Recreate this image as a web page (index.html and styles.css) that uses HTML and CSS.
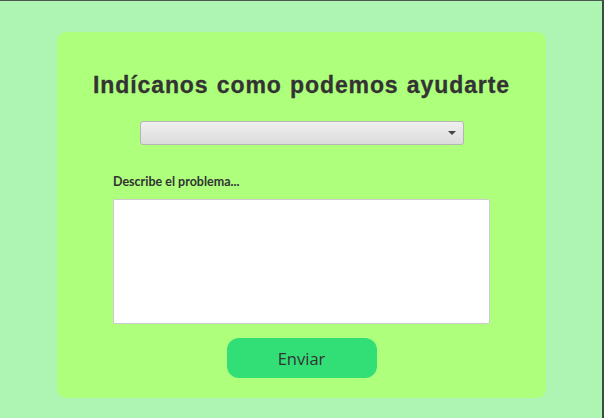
FILE: index.html
```html
<!DOCTYPE html>
<html lang="es">
<head>
<meta charset="utf-8">
<title>Ayuda</title>
<link rel="stylesheet" href="styles.css">
</head>
<body>
<div class="frame">
  <main class="card">
    <h1 class="title">Indícanos como podemos ayudarte</h1>
    <div class="select">
      <span class="arrow"></span>
    </div>
    <div class="field">
      <label class="label">Describe el problema...</label>
      <div class="textarea"></div>
    </div>
    <button class="send">Enviar</button>
  </main>
</div>
</body>
</html>
```
FILE: styles.css
```css
html, body {
  margin: 0;
  padding: 0;
}
body {
  width: 604px;
  height: 418px;
  overflow: hidden;
  background: #aef5b3;
}
.frame {
  box-sizing: border-box;
  width: 604px;
  height: 418px;
  border-top: 1px solid #4a5a4c;
  border-right: 2px solid #3d4a3f;
  padding: 31px 0 0 57px;
}
.card {
  box-sizing: border-box;
  width: 489px;
  height: 366px;
  background: #adff7c;
  border-radius: 9px;
  display: flex;
  flex-direction: column;
  align-items: center;
  padding-top: 40px;
}
.title {
  margin: 0;
  font-family: "Liberation Sans", Arial, sans-serif;
  font-weight: bold;
  font-size: 23px;
  letter-spacing: 0.9px;
  word-spacing: 1px;
  line-height: 26px;
  color: #333333;
  -webkit-text-stroke: 0.3px #333333;
}
.select {
  box-sizing: border-box;
  margin-top: 23px;
  width: 324px;
  height: 24px;
  border: 1px solid #b5b5b5;
  border-radius: 3px;
  background: linear-gradient(#efefef, #dcdcdc);
  display: flex;
  align-items: center;
  justify-content: flex-end;
  padding-right: 7px;
}
.arrow {
  width: 0;
  height: 0;
  border-left: 4px solid transparent;
  border-right: 4px solid transparent;
  border-top: 4px solid #444;
}
.field {
  margin-top: 29px;
  width: 377px;
  display: flex;
  flex-direction: column;
}
.label {
  font-family: Lato, "Noto Sans", sans-serif;
  font-weight: bold;
  font-size: 12.5px;
  line-height: 15px;
  color: #333333;
  margin-bottom: 10px;
}
.textarea {
  box-sizing: border-box;
  width: 377px;
  height: 125px;
  background: #ffffff;
  border: 1px solid #cccccc;
  border-radius: 2px;
}
.send {
  margin-top: 14px;
  width: 150px;
  height: 40px;
  border: none;
  border-radius: 12px;
  background: #31df76;
  color: #333333;
  font-family: "Open Sans", sans-serif;
  font-size: 16.5px;
  padding: 0;
}
```
